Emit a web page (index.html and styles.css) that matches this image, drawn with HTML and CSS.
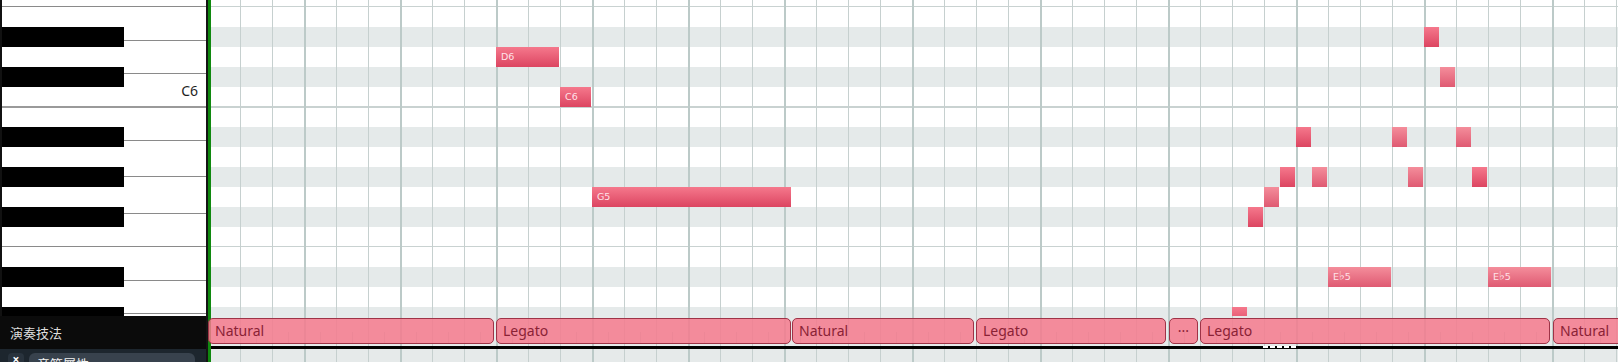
FILE: index.html
```html
<!DOCTYPE html>
<html lang="zh">
<head>
<meta charset="utf-8">
<title>Piano Roll</title>
<link rel="stylesheet" href="styles.css">
</head>
<body>
<div class="app">
  <div class="left">
    <div class="piano">
      <div class="wkey k0"></div>
      <div class="wkey k1"></div>
      <div class="wkey k2"></div>
      <div class="wkey k3"><span class="klabel">C6</span></div>
      <div class="wkey k4 oct"></div>
      <div class="wkey k5"></div>
      <div class="wkey k6"></div>
      <div class="wkey k7"></div>
      <div class="wkey k8"></div>
      <div class="wkey k9"></div>
      <div class="wkey k10"></div>
      <div class="bkey" style="top:27px"></div>
      <div class="bkey" style="top:67px"></div>
      <div class="bkey" style="top:127px"></div>
      <div class="bkey" style="top:167px"></div>
      <div class="bkey" style="top:207px"></div>
      <div class="bkey" style="top:267px"></div>
      <div class="bkey" style="top:307px"></div>
    </div>
    <div class="lane-label">演奏技法</div>
    <div class="left-foot">
      <div class="foot-icon">×</div>
      <div class="foot-input">音符屬性</div>
    </div>
  </div>
  <div class="sep"></div>
  <div class="green"></div>
  <div class="right">
    <div class="roll">
      <div class="rows">
        <div class="row r-top"></div>
        <div class="row"></div>
        <div class="row blk"></div>
        <div class="row"></div>
        <div class="row blk"></div>
        <div class="row r-c"></div>
        <div class="row r-b"></div>
        <div class="row blk"></div>
        <div class="row"></div>
        <div class="row blk"></div>
        <div class="row"></div>
        <div class="row blk"></div>
        <div class="row r-f"></div>
        <div class="row"></div>
        <div class="row blk"></div>
        <div class="row"></div>
        <div class="row blk"></div>
      </div>
      <div class="notes">
        <div class="note" style="left:285px;top:47px;width:63px">D6</div>
        <div class="note" style="left:349px;top:87px;width:31px">C6</div>
        <div class="note" style="left:381px;top:187px;width:199px">G5</div>
        <div class="note" style="left:1213px;top:27px;width:15px"></div>
        <div class="note soft" style="left:1229px;top:67px;width:15px"></div>
        <div class="note" style="left:1085px;top:127px;width:15px"></div>
        <div class="note soft" style="left:1181px;top:127px;width:15px"></div>
        <div class="note soft" style="left:1245px;top:127px;width:15px"></div>
        <div class="note" style="left:1069px;top:167px;width:15px"></div>
        <div class="note soft" style="left:1101px;top:167px;width:15px"></div>
        <div class="note soft" style="left:1197px;top:167px;width:15px"></div>
        <div class="note" style="left:1261px;top:167px;width:15px"></div>
        <div class="note soft" style="left:1053px;top:187px;width:15px"></div>
        <div class="note" style="left:1037px;top:207px;width:15px"></div>
        <div class="note soft" style="left:1117px;top:267px;width:63px">E<span class="flat">♭</span>5</div>
        <div class="note soft" style="left:1277px;top:267px;width:63px">E<span class="flat">♭</span>5</div>
        <div class="note" style="left:1021px;top:307px;width:15px"></div>
      </div>
    </div>
    <div class="lane">
      <div class="art" style="left:-3px;width:286px">Natural</div>
      <div class="art" style="left:285px;width:295px">Legato</div>
      <div class="art" style="left:581px;width:182px">Natural</div>
      <div class="art" style="left:765px;width:190px">Legato</div>
      <div class="art more" style="left:958px;width:29px">···</div>
      <div class="art" style="left:989px;width:350px">Legato</div>
      <div class="art" style="left:1342px;width:120px">Natural</div>
    </div>
    <div class="lane-rule"><div class="loop-dash"></div></div>
    <div class="foot"></div>
    <div class="grid-lines">
      <div class="bars">
        <div class="bar b3"></div>
        <div class="bar b3"></div>
        <div class="bar b3"></div>
        <div class="bar b3"></div>
        <div class="bar b3"></div>
        <div class="bar b4"></div>
        <div class="bar b4"></div>
        <div class="bar b4"></div>
        <div class="bar b4"></div>
        <div class="bar b4"></div>
        <div class="bar b4"></div>
        <div class="bar b4"></div>
      </div>
    </div>
  </div>
</div>
</body>
</html>
```

FILE: styles.css
```css
* { box-sizing: border-box; }

html, body {
  margin: 0;
  padding: 0;
  width: 1618px;
  height: 362px;
  overflow: hidden;
  background: #e6eaea;
  font-family: "Noto Sans", "DejaVu Sans", sans-serif;
}

.app {
  display: flex;
  width: 1618px;
  height: 362px;
}

/* ---------- left column ---------- */
.left {
  width: 206px;
  flex: none;
  display: flex;
  flex-direction: column;
  background: #0b0b0b;
}

.piano {
  position: relative;
  height: 316px;
  flex: none;
  overflow: hidden;
  background: #fff;
  border-left: 2px solid #111;
  display: flex;
  flex-direction: column;
}

.wkey {
  flex: none;
  border-top: 1px solid #8a8a8a;
  display: flex;
  align-items: flex-end;
  justify-content: flex-end;
}
.k0 { height: 6px; border-top: none; }
.k1 { height: 34px; }
.k2 { height: 33px; }
.k3 { height: 33px; padding: 0 8px 6px 0; }
.k4 { height: 34px; }
.k5 { height: 36px; }
.k6 { height: 37px; }
.k7 { height: 33px; }
.k8 { height: 34px; }
.k9 { height: 33px; }
.k10 { height: 20px; }
.oct { border-top: 2px solid #9a9a9a; }

.klabel {
  font-size: 14px;
  line-height: 19px;
  color: #1e1e1e;
}

.bkey {
  position: absolute;
  left: 0;
  width: 122px;
  height: 20px;
  background: #000;
}

.lane-label {
  height: 33px;
  flex: none;
  display: flex;
  align-items: center;
  padding-left: 10px;
  color: #dedede;
  font-family: "Noto Sans CJK SC", "Noto Sans CJK TC", sans-serif;
  font-size: 13px;
}

.left-foot {
  flex: 1;
  background: #1d262e;
  display: flex;
  gap: 5px;
  padding: 4px 11px 0 8px;
  overflow: hidden;
}
.foot-icon {
  width: 16px;
  height: 22px;
  border-radius: 4px;
  background: #29333d;
  color: #fff;
  font-size: 12px;
  line-height: 14px;
  text-align: center;
  font-weight: bold;
}
.foot-input {
  flex: 1;
  height: 26px;
  border-radius: 6px;
  background: #38424d;
  color: #f2f2f2;
  font-family: "Noto Sans CJK SC", "Noto Sans CJK TC", sans-serif;
  font-size: 13px;
  line-height: 18px;
  padding: 2px 8px;
}

.sep {
  width: 2px;
  flex: none;
  background: #141414;
}
.green {
  width: 3px;
  flex: none;
  background: #10890f;
}

/* ---------- right column ---------- */
.right {
  position: relative;
  flex: 1;
  display: flex;
  flex-direction: column;
}

.roll {
  position: relative;
  height: 316px;
  flex: none;
  overflow: hidden;
  background: #fff;
}

.rows {
  display: flex;
  flex-direction: column;
}
.row {
  height: 20px;
  flex: none;
  background: #fff;
}
.row.blk { background: #e5eaea; }
.r-top { height: 7px; border-bottom: 1px solid #c9d2d1; }
.r-c { border-bottom: 1px solid #c9d2d1; }
.r-b { border-top: 1px solid #c9d2d1; }
.r-f { border-bottom: 1px solid #c9d2d1; }

.notes {
  position: absolute;
  inset: 0;
  z-index: 2;
}
.note {
  position: absolute;
  height: 20px;
  padding-left: 5px;
  background: linear-gradient(#f5788c, #dc4561);
  color: #ffe3e9;
  font-family: "DejaVu Sans", sans-serif;
  font-size: 9.5px;
  line-height: 20px;
  white-space: nowrap;
  overflow: hidden;
}
.note.soft {
  background: linear-gradient(#f48d9b, #df5a72);
}
.flat {
  font-size: 12px;
  line-height: 10px;
}

.lane {
  position: relative;
  height: 30px;
  flex: none;
  background-color: #e6eaea;
  background-image: repeating-linear-gradient(90deg, transparent 0 13px, #c3cdcc 13px 14px, transparent 14px 16px);
  background-size: 100% 12px;
  background-position: 0 16px;
  background-repeat: no-repeat;
}

.art {
  position: absolute;
  top: 2px;
  height: 26px;
  z-index: 2;
  border: 1px solid #9e3347;
  border-radius: 5px;
  background: rgba(245, 122, 141, 0.85);
  color: #8a2236;
  font-size: 14px;
  line-height: 24px;
  padding-left: 6px;
  white-space: nowrap;
  overflow: hidden;
}
.art.more {
  padding-left: 0;
  text-align: center;
  font-size: 14px;
}

.lane-rule {
  position: relative;
  z-index: 3;
  height: 3px;
  flex: none;
  background: #000;
}
.loop-dash {
  position: absolute;
  left: 1052px;
  top: 0;
  width: 34px;
  height: 2px;
  background: repeating-linear-gradient(90deg, #fff 0 5px, transparent 5px 7px);
}

.foot {
  flex: 1;
  background: #e6eaea;
}

.grid-lines {
  position: absolute;
  inset: 0;
  z-index: 1;
  pointer-events: none;
  background: repeating-linear-gradient(90deg, transparent 0 29px, #c6d0cf 29px 30px, transparent 30px 32px);
}
.bars {
  position: absolute;
  top: 0;
  bottom: 0;
  left: 93px;
  display: flex;
}
.bar {
  flex: none;
  border-left: 2px solid #bccac8;
}
.b3 { width: 96px; }
.b4 { width: 128px; }
```
